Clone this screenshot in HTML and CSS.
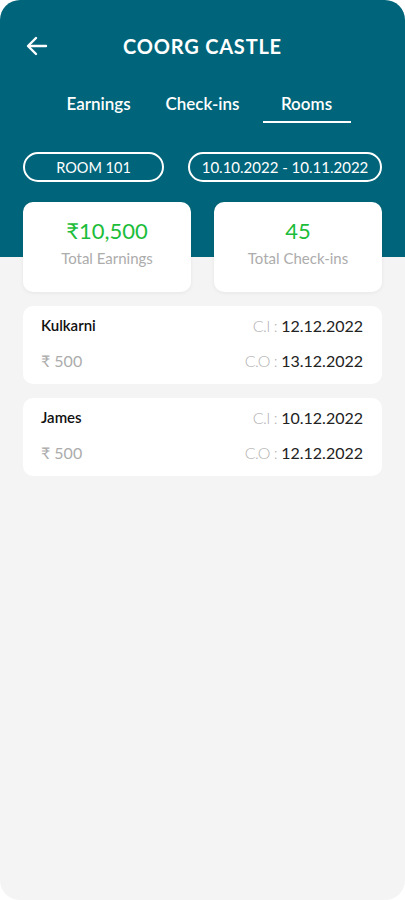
FILE: index.html
```html
<!DOCTYPE html>
<html lang="en">
<head>
    <meta charset="UTF-8">
    <meta name="viewport" content="width=device-width, initial-scale=1.0">
    <title>Coorg Castle - Rooms</title>
    <link rel="stylesheet" href="styles.css">
</head>
<body>
    <div class="screen">
        <div class="topbar">
            <span class="back">
                <svg width="22" height="20" viewBox="0 0 22 20" fill="none" stroke="#fff" stroke-width="2.4" stroke-linecap="round" stroke-linejoin="round">
                    <path d="M20 10H3"/>
                    <path d="M10 2L2 10l8 8"/>
                </svg>
            </span>
            <h1>COORG CASTLE</h1>
        </div>

        <nav class="tabs">
            <a class="tab">Earnings</a>
            <a class="tab">Check-ins</a>
            <a class="tab active">Rooms</a>
        </nav>

        <div class="filters">
            <div class="pill room">ROOM 101</div>
            <div class="pill dates">10.10.2022 - 10.11.2022</div>
        </div>

        <div class="stats">
            <div class="stat">
                <div class="value">₹10,500</div>
                <div class="label">Total Earnings</div>
            </div>
            <div class="stat">
                <div class="value">45</div>
                <div class="label">Total Check-ins</div>
            </div>
        </div>

        <div class="list">
            <div class="guest">
                <div class="line">
                    <span class="name">Kulkarni</span>
                    <span class="date"><em>C.I :</em> 12.12.2022</span>
                </div>
                <div class="line">
                    <span class="price">₹ 500</span>
                    <span class="date"><em>C.O :</em> 13.12.2022</span>
                </div>
            </div>
            <div class="guest">
                <div class="line">
                    <span class="name">James</span>
                    <span class="date"><em>C.I :</em> 10.12.2022</span>
                </div>
                <div class="line">
                    <span class="price">₹ 500</span>
                    <span class="date"><em>C.O :</em> 12.12.2022</span>
                </div>
            </div>
        </div>
    </div>
</body>
</html>
```

FILE: styles.css
```css
body {
    margin: 0;
    background: #fff;
    font-family: 'Lato', 'Noto Sans', sans-serif;
}
.screen {
    width: 405px;
    height: 900px;
    border-radius: 20px;
    overflow: hidden;
    background: linear-gradient(#00657a 257px, #f4f4f4 257px);
    padding: 30px 23px 0;
    box-sizing: border-box;
}
.topbar {
    position: relative;
    height: 32px;
    display: flex;
    align-items: center;
    justify-content: center;
}
.back {
    position: absolute;
    left: 3px;
    top: 6px;
    display: flex;
}
h1 {
    margin: 0;
    color: #fff;
    font-size: 20px;
    font-weight: 700;
    letter-spacing: 0.8px;
}
.tabs {
    display: flex;
    justify-content: center;
    gap: 16px;
    margin-top: 14px;
}
.tab {
    width: 88px;
    height: 20px;
    line-height: 20px;
    text-align: center;
    color: #fff;
    font-size: 17px;
    font-weight: 600;
    padding: 18px 0 7px;
    border-bottom: 2px solid transparent;
}
.tab.active {
    border-bottom-color: #fff;
}
.filters {
    display: flex;
    justify-content: space-between;
    margin-top: 29px;
}
.pill {
    height: 30px;
    box-sizing: border-box;
    border: 2px solid #fff;
    border-radius: 15px;
    color: #fff;
    display: flex;
    align-items: center;
    justify-content: center;
}
.room {
    width: 141px;
    font-size: 14.5px;
}
.dates {
    width: 194px;
    font-size: 15px;
}
.stats {
    display: flex;
    justify-content: space-between;
    margin-top: 20px;
}
.stat {
    width: 168px;
    height: 90px;
    background: #fff;
    border-radius: 10px;
    box-shadow: 0 1px 4px rgba(0, 0, 0, 0.06);
    text-align: center;
    box-sizing: border-box;
    padding-top: 15px;
}
.value {
    color: #1cbd3a;
    font-size: 22px;
    line-height: 28px;
}
.label {
    color: #acacac;
    font-size: 15px;
    margin-top: 4px;
}
.list {
    display: flex;
    flex-direction: column;
    gap: 14px;
    margin-top: 14px;
}
.guest {
    background: #fff;
    border-radius: 10px;
    height: 78px;
    box-sizing: border-box;
    padding: 9px 19px 0 18px;
}
.line {
    display: flex;
    justify-content: space-between;
    align-items: center;
    height: 20px;
    margin-bottom: 15px;
}
.name {
    color: #111;
    font-size: 15px;
    font-weight: 600;
}
.price {
    color: #acacac;
    font-size: 16px;
}
.date {
    color: #222;
    font-size: 16px;
}
.date em {
    font-style: normal;
    font-weight: 300;
    color: #b4b4b4;
    letter-spacing: -0.5px;
}
```
